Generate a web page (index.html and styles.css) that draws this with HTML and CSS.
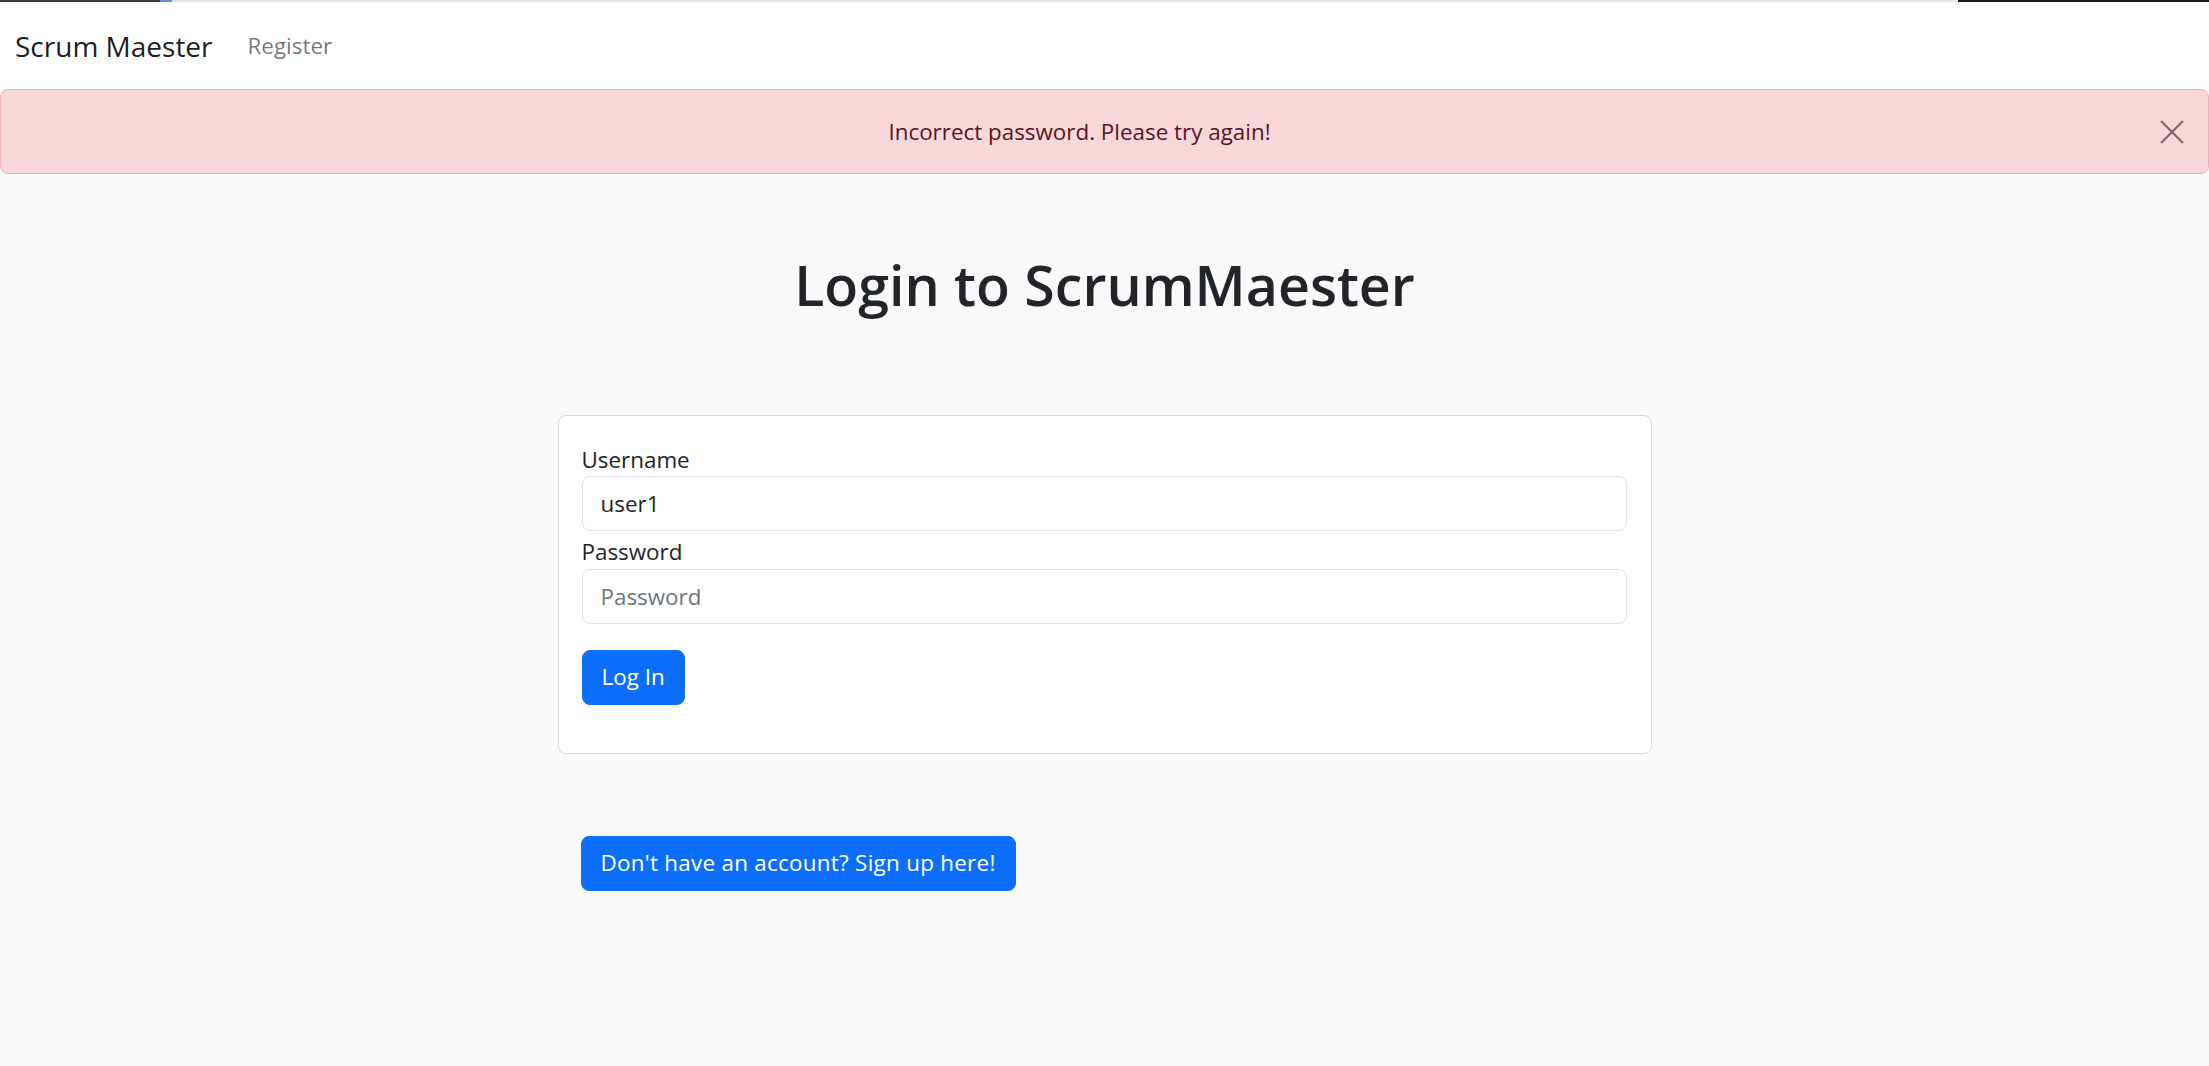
FILE: index.html
```html
<!DOCTYPE html>
<html lang="en">
<head>
<meta charset="utf-8">
<title>Login - Scrum Maester</title>
<link rel="stylesheet" href="styles.css">
</head>
<body>
<div class="topline"></div>
<nav class="navbar">
  <a class="brand" href="#">Scrum Maester</a>
  <a class="nav-link" href="#">Register</a>
</nav>
<div class="alert">
  <span class="alert-text">Incorrect password. Please try again!</span>
  <button class="btn-close" type="button" aria-label="Close">
    <svg viewBox="0 0 24 24" width="24" height="24"><path d="M1 1 L23 23 M23 1 L1 23" stroke="currentColor" stroke-width="2.2" fill="none"/></svg>
  </button>
</div>
<main class="main">
  <h1 class="title">Login to ScrumMaester</h1>
  <div class="card">
    <form class="form">
      <label class="label" for="username">Username</label>
      <input class="input" id="username" type="text" value="user1">
      <label class="label label-gap" for="password">Password</label>
      <input class="input" id="password" type="password" placeholder="Password">
      <button class="btn btn-login" type="button">Log In</button>
    </form>
  </div>
  <div class="signup-row">
    <button class="btn btn-signup" type="button">Don't have an account? Sign up here!</button>
  </div>
</main>
</body>
</html>
```

FILE: styles.css
```css
* { box-sizing: border-box; }
html, body { margin: 0; padding: 0; }
body {
  font-family: "Open Sans", sans-serif;
  font-size: 22.4px;
  line-height: 1.5;
  color: #212529;
  background: #f9f9f9;
  min-height: 1066px;
}
.topline {
  height: 2px;
  background: linear-gradient(to right, #3a3a3a 0, #3a3a3a 160px, #6b8fd6 160px, #6b8fd6 172px, #e6e6e6 172px, #e6e6e6 1958px, #1a1a1a 1958px);
}
.navbar {
  height: 87px;
  background: #fff;
  display: flex;
  align-items: center;
  padding: 0 0 0 15px;
  gap: 35px;
}
.brand {
  font-size: 28px;
  color: rgba(0,0,0,0.9);
  text-decoration: none;
}
.nav-link {
  font-size: 22.4px;
  color: rgba(0,0,0,0.55);
  text-decoration: none;
}
.alert {
  height: 85px;
  background: #f8d7da;
  border: 1px solid #f1aeb5;
  border-radius: 8px;
  color: #58151c;
  display: flex;
  align-items: center;
  justify-content: center;
  padding: 0 50px 0 0;
  position: relative;
}
.btn-close {
  position: absolute;
  right: 24px;
  top: 50%;
  transform: translateY(-50%);
  background: none;
  border: 0;
  padding: 0;
  width: 24px;
  height: 24px;
  color: #7c6a6c;
  display: flex;
}
.main {
  display: flex;
  flex-direction: column;
  align-items: center;
}
.title {
  margin: 78px 0 0;
  font-size: 55.5px;
  font-weight: 600;
  line-height: 1.2;
  text-align: center;
}
.card {
  margin-top: 96px;
  width: 1094px;
  background: #fff;
  border: 1px solid #d9d9d9;
  border-radius: 8px;
  padding: 27px 24px 48px 23px;
}
.form {
  display: flex;
  flex-direction: column;
  align-items: flex-start;
}
.label { display: block; line-height: 33.6px; }
.label-gap { margin-top: 4px; }
.input {
  width: 100%;
  height: 55px;
  border: 1px solid #dee2e6;
  border-radius: 8px;
  padding: 0 18px;
  font: inherit;
  color: #212529;
  background: #fff;
}
.input::placeholder { color: #6c757d; }
.btn {
  font: inherit;
  color: #fff;
  background: #0d6efd;
  border: 1px solid #0d6efd;
  border-radius: 8px;
  height: 55px;
  padding: 0 19px;
  cursor: pointer;
}
.btn-login { margin-top: 26px; }
.btn-signup { letter-spacing: 0.28px; }
.signup-row {
  width: 1094px;
  margin-top: 82px;
  padding-left: 23px;
}
```
